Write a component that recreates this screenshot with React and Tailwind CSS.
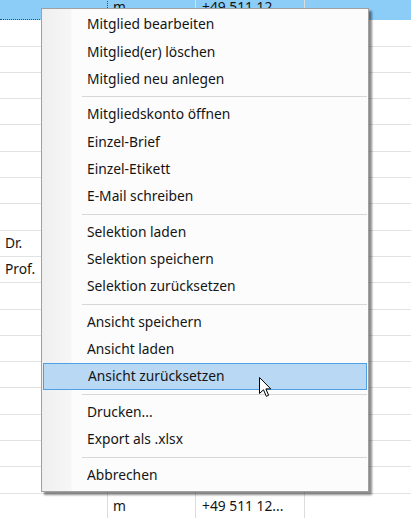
import React from "react";

const rows = [
  { title: "", sex: "m", phone: "+49 511 12...", selected: true },
  ...Array.from({ length: 8 }, () => ({ title: "", sex: "", phone: "" })),
  { title: "Dr.", sex: "", phone: "" },
  { title: "Prof.", sex: "", phone: "" },
  ...Array.from({ length: 8 }, () => ({ title: "", sex: "", phone: "" })),
  { title: "", sex: "m", phone: "+49 511 12..." },
];

const menu = [
  ["Mitglied bearbeiten", "Mitglied(er) löschen", "Mitglied neu anlegen"],
  ["Mitgliedskonto öffnen", "Einzel-Brief", "Einzel-Etikett", "E-Mail schreiben"],
  ["Selektion laden", "Selektion speichern", "Selektion zurücksetzen"],
  ["Ansicht speichern", "Ansicht laden", "Ansicht zurücksetzen"],
  ["Drucken...", "Export als .xlsx"],
  ["Abbrechen"],
];

const GridRow = ({ row }) => (
  <div
    className={`flex h-[26.3px] ${
      row.selected ? "bg-[#8ccdf8]" : "bg-white border-b border-[#e2e2e2]"
    }`}
  >
    <div
      className={`w-[108px] shrink-0 flex items-center pl-[5px] ${
        row.selected
          ? "border-b border-r border-dotted border-[#30506c]"
          : "border-r border-[#dcdcdc]"
      }`}
    >
      {row.title}
    </div>
    <div className="w-[88px] shrink-0 flex items-center pl-[5px] border-r border-[#dcdcdc]">
      {row.sex}
    </div>
    <div className="w-[109px] shrink-0 flex items-center pl-[6px] border-r border-[#dcdcdc]">
      {row.phone}
    </div>
    <div className="flex-1" />
  </div>
);

const Cursor = () => (
  <svg width="13" height="21" viewBox="0 0 13 21" className="absolute left-[259px] top-[377px]">
    <path
      d="M0.5 0.5 L0.5 16.5 L4.5 12.8 L7.3 19.3 L9.6 18.3 L6.9 11.9 L11.8 11.9 Z"
      fill="#fff"
      stroke="#000"
      strokeWidth="1"
      strokeLinejoin="round"
    />
  </svg>
);

const App = () => {
  return (
    <div
      className="relative w-[411px] h-[518px] overflow-hidden bg-white text-[13.8px] text-[#141414]"
      style={{ fontFamily: '"Noto Sans", "Open Sans", sans-serif' }}
    >
      <div className="-mt-[6px]">
        {rows.map((row, i) => (
          <GridRow key={i} row={row} />
        ))}
      </div>

      {/* context menu */}
      <div className="absolute left-[41px] top-[8px] w-[328px] border border-[#a0a0a0] bg-[linear-gradient(to_right,#efefef_0px,#f6f6f6_29px,#fcfcfc_30px)] py-[2px] shadow-[3px_3px_2px_rgba(0,0,0,0.45)]">
        {menu.map((group, gi) => (
          <div key={gi}>
            {gi > 0 && (
              <div className="h-[8.2px] flex items-center ml-[40px] mr-[1px]">
                <div className="w-full h-px bg-[#d7d7d7]" />
              </div>
            )}
            {group.map((label) => {
              const active = label === "Ansicht zurücksetzen";
              return (
                <div
                  key={label}
                  className={`h-[27.3px] flex items-center ${
                    active
                      ? "mx-[1px] pl-[44px] border border-[#4d9fe6] bg-[#b8d8f4]"
                      : "pl-[45px]"
                  }`}
                >
                  {label}
                </div>
              );
            })}
          </div>
        ))}
      </div>

      <Cursor />
    </div>
  );
};

export default App;
